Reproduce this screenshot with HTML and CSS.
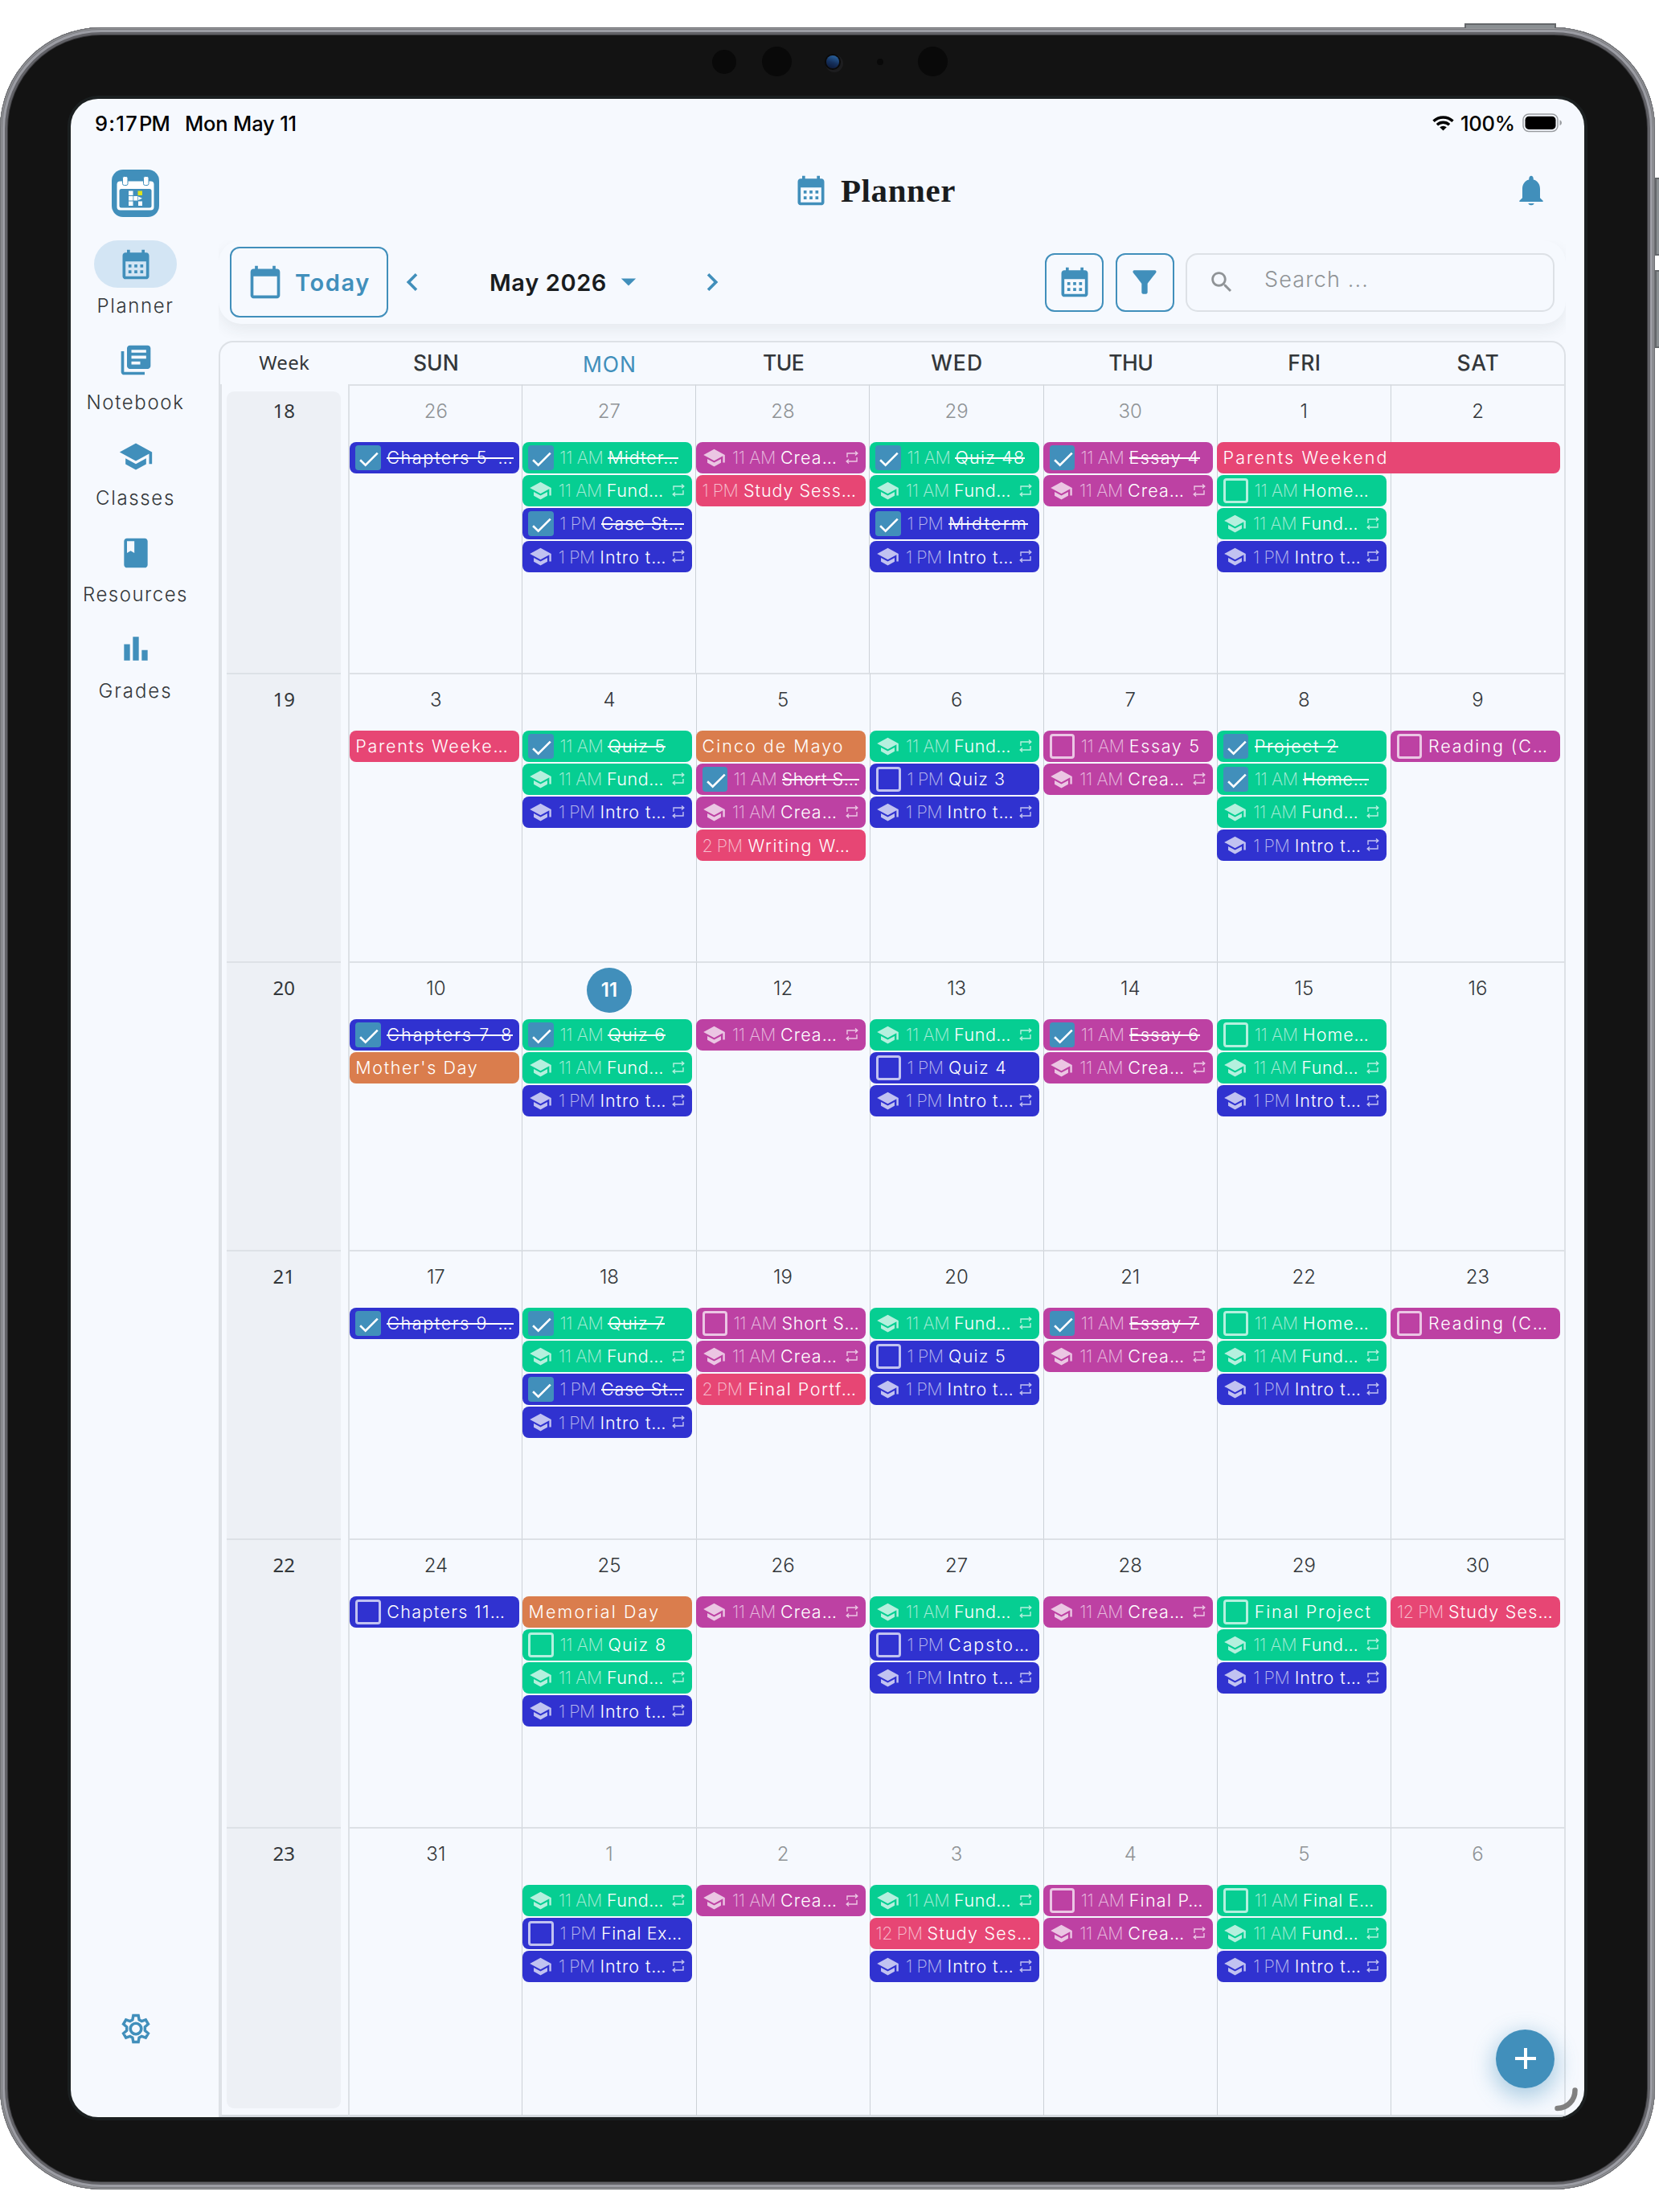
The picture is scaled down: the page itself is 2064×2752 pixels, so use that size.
FILE: index.html
```
<!DOCTYPE html>
<html lang="en">
<head>
  <meta charset="UTF-8" />
  <meta name="viewport" content="width=device-width, initial-scale=1.0" />
  <title>Planner</title>
  <link rel="stylesheet" href="styles.css">
</head>
<body>
  <!-- shared icons -->
  <svg class="defs" width="0" height="0">
    <symbol id="i-month" viewBox="0 0 24 24"><path d="M19 4h-1V2h-2v2H8V2H6v2H5c-1.100 0-2 .9-2 2v14c0 1.100.9 2 2 2h14c1.100 0 2-.9 2-2V6c0-1.100-.9-2-2-2zm0 16H5V10h14v10zM9 14H7v-2h2v2zm4 0h-2v-2h2v2zm4 0h-2v-2h2v2zm-8 4H7v-2h2v2zm4 0h-2v-2h2v2zm4 0h-2v-2h2v2z"/></symbol>
    <symbol id="i-day" viewBox="0 0 24 24"><path d="M20 3h-1V1h-2v2H7V1H5v2H4c-1.100 0-2 .9-2 2v16c0 1.100.9 2 2 2h16c1.100 0 2-.9 2-2V5c0-1.100-.9-2-2-2zm0 18H4V8h16v13z"/></symbol>
    <symbol id="i-notes" viewBox="0 0 24 24"><path d="M4 6H2v14c0 1.100.9 2 2 2h14v-2H4V6zM20 2H8c-1.100 0-2 .9-2 2v12c0 1.100.9 2 2 2h12c1.100 0 2-.9 2-2V4c0-1.100-.9-2-2-2zm-1 9H9V9h10v2zm-4 4H9v-2h6v2zm4-8H9V5h10v2z"/></symbol>
    <symbol id="i-school" viewBox="0 0 24 24"><path d="M5 13.180v4L12 21l7-3.820v-4L12 17l-7-3.820zM12 3L1 9l11 6 9-4.910V17h2V9L12 3z"/></symbol>
    <symbol id="i-book" viewBox="0 0 24 24"><path d="M18 2H6c-1.100 0-2 .9-2 2v16c0 1.100.9 2 2 2h12c1.100 0 2-.9 2-2V4c0-1.100-.9-2-2-2zM6 4h5v8l-2.500-1.500L6 12V4z"/></symbol>
    <symbol id="i-bars" viewBox="0 0 24 24"><path d="M4 9h4v11H4zM16 13h4v7h-4zM10 4h4v16h-4z"/></symbol>
    <symbol id="i-repeat" viewBox="0 0 16 16"><path d="M2 8V3h12M12 .5L14.800 3 12 5.500M14 8v5H2M4 10.500L1.200 13 4 15.500" fill="none" stroke="currentColor" stroke-width="1.400"/></symbol>
    <symbol id="i-check" viewBox="0 0 31 31"><path d="M6 18l6.500 6.200L27.300 9.500" fill="none" stroke="#fff" stroke-width="2.600"/></symbol>
  </svg>

  <div class="device">
    <span class="hw-btn hw-top"></span>
    <span class="hw-btn hw-vol1"></span>
    <span class="hw-btn hw-vol2"></span>
    <span class="sensor s1"></span>
    <span class="sensor s2"></span>
    <span class="sensor lens"></span>
    <span class="sensor s3"></span>
    <span class="sensor s4"></span>

    <div class="screen">
      <div class="status">
        <span class="status-time"><span data-w="54">9:17</span><span data-w="38">PM</span></span>
        <span data-w="139">Mon May 11</span>
        <span class="status-right">
          <svg class="wifi" viewBox="0 0 27 19"><path d="M1.500 6.800a17.500 17.500 0 0 1 24 0M5.900 11.200a11.200 11.200 0 0 1 15.200 0" fill="none" stroke="#000" stroke-width="3.400"/><path d="M9.200 14.300a6.500 6.500 0 0 1 8.600 0L13.500 18.600z"/></svg>
          <span data-w="68">100%</span>
          <svg class="battery" viewBox="0 0 50 24"><rect x="1" y="1" width="43" height="21.500" rx="7" fill="none" stroke="#999ca0" stroke-width="1.500"/><rect x="3.500" y="3.700" width="38" height="16.200" rx="4.500"/><path d="M46.500 8.200c3.300 1.500 3.300 5.500 0 7z" fill="#999ca0"/></svg>
        </span>
      </div>

      <div class="app">
        <nav class="sidebar">
          <svg class="logo" viewBox="0 0 59 59">
            <rect width="59" height="59" rx="14" fill="#418fbb"/>
            <rect x="6.500" y="14.500" width="46" height="36" rx="4" fill="#fff"/>
            <rect x="9.500" y="24" width="40" height="23.500" rx="2.500" fill="#418fbb"/>
            <rect x="13.500" y="8.500" width="6.500" height="11" rx="2" fill="#fff" stroke="#418fbb"/>
            <rect x="39.500" y="8.500" width="6.500" height="11" rx="2" fill="#fff" stroke="#418fbb"/>
            <path d="M21 26.500h5.500v5.500H21zM21 33h5.500v5.500H21zM21 39.500h5.500V45H21zM27.300 33h5v5.500h-5zM33 33.500l5 2.200-5 2.300zM33 39.500h5V45h-5z" fill="#fff"/>
            <path d="M32.500 26.500H38V32h-5.500z" fill="#dfe31c"/>
          </svg>
          <a class="nav-item active"><span class="pill"><svg><use href="#i-month"/></svg></span><span class="label" data-w="96">Planner</span></a>
          <a class="nav-item"><span class="pill"><svg><use href="#i-notes"/></svg></span><span class="label" data-w="122">Notebook</span></a>
          <a class="nav-item"><span class="pill"><svg><use href="#i-school"/></svg></span><span class="label" data-w="99">Classes</span></a>
          <a class="nav-item"><span class="pill"><svg><use href="#i-book"/></svg></span><span class="label" data-w="131">Resources</span></a>
          <a class="nav-item"><span class="pill"><svg><use href="#i-bars"/></svg></span><span class="label" data-w="92">Grades</span></a>
          <svg class="settings" viewBox="0 0 24 24"><path d="M10.300 3h3.400l.55 2.900 1.700 1 2.750-1 1.700 2.950-2.200 1.900v2.500l2.200 1.900-1.700 2.950-2.750-1-1.700 1-.55 2.900h-3.400l-.55-2.900-1.700-1-2.750 1-1.700-2.950 2.200-1.900v-2.500l-2.200-1.900 1.700-2.950 2.750 1 1.700-1z"/><circle cx="12" cy="12" r="3.700"/></svg>
        </nav>

        <main>
          <header>
            <svg class="ic title-ic"><use href="#i-month"/></svg>
            <h1 data-w="143">Planner</h1>
            <svg class="ic bell" viewBox="0 0 24 24"><path d="M12 22c.9 0 1.800-.5 2-1.300h-4c.2.8 1.100 1.300 2 1.300zM18 17V11c0-3.070-1.640-5.640-4.500-6.320V4c0-1.100-.67-2-1.500-2s-1.500.9-1.500 2v.68C7.630 5.360 6 7.920 6 11v6l-2 2v.6h16V19l-2-2z"/></svg>
          </header>

          <div class="toolbar-wrap">
            <div class="toolbar">
              <button class="btn today-btn"><svg class="ic"><use href="#i-day"/></svg><span data-w="94">Today</span></button>
              <svg class="ic prev" viewBox="0 0 24 24"><path d="M15.410 7.410L14 6l-6 6 6 6 1.410-1.410L10.830 12z"/></svg>
              <div class="month">
                <span data-w="146">May 2026</span>
                <svg class="ic" viewBox="0 0 24 24"><path d="M7 9.500l5 5 5-5z"/></svg>
              </div>
              <svg class="ic" viewBox="0 0 24 24"><path d="M10 6L8.590 7.410 13.170 12l-4.580 4.590L10 18l6-6z"/></svg>
              <button class="btn sq push"><svg class="ic"><use href="#i-month"/></svg></button>
              <button class="btn sq"><svg class="ic" viewBox="0 0 24 24"><path d="M4.250 5.610C6.270 8.200 10 13 10 13v6c0 .55.45 1 1 1h2c.55 0 1-.45 1-1v-6s3.720-4.800 5.740-7.390c.51-.66.04-1.610-.79-1.610H5.040c-.83 0-1.300.95-.79 1.610z"/></svg></button>
              <div class="search">
                <svg viewBox="0 0 24 24"><path d="M15.500 14h-.79l-.28-.27C15.410 12.590 16 11.110 16 9.500 16 5.910 13.090 3 9.500 3S3 5.910 3 9.500 5.910 16 9.500 16c1.610 0 3.090-.59 4.230-1.570l.27.28v.79l5 4.990L20.490 19l-4.990-5zm-6 0C7.010 14 5 11.990 5 9.500S7.010 5 9.500 5 14 7.010 14 9.500 11.990 14 9.500 14z"/></svg>
                <span data-w="130">Search ...</span>
              </div>
            </div>
          </div>

          <section class="calendar">
            <div class="cal-head">
              <span class="week-title"><span data-w="63">Week</span></span>
              <span class="dow"><span data-w="57">SUN</span></span>
              <span class="dow now"><span data-w="67">MON</span></span>
              <span class="dow"><span data-w="51">TUE</span></span>
              <span class="dow"><span data-w="65">WED</span></span>
              <span class="dow"><span data-w="55">THU</span></span>
              <span class="dow"><span data-w="41">FRI</span></span>
              <span class="dow"><span data-w="53">SAT</span></span>
            </div>
            <div class="weeks" id="weeks"></div>
          </section>
        </main>
      </div>

      <div class="fab"><svg viewBox="0 0 26 26"><path d="M13 0v26M0 13h26" stroke="#fff" stroke-width="4"/></svg></div>
      <svg class="resize" viewBox="0 0 30 30"><path d="M25.500 3.500A22 22 0 0 1 3.500 26" fill="none" stroke="#808080" stroke-width="6.500" stroke-linecap="round"/></svg>
    </div>
  </div>

  <script src="planner.js"></script>
</body>
</html>
```
FILE: styles.css
```
:root {
  --blue: #418fbb;
  --bg: #f6f9fe;
  --line: #dde1e6;
  --text: #33373a;
  --muted: #8f9396;
}
* { box-sizing: border-box; margin: 0; padding: 0; }
body {
  width: 2064px;
  height: 2752px;
  padding-top: 34px;
  overflow: hidden;
  background: #fff;
  color: var(--text);
  font-family: Inter, "Noto Sans", sans-serif;
}
.defs { position: absolute; }
svg { display: block; fill: currentColor; flex: none; }
[data-w] { display: inline-block; white-space: nowrap; }

/* tablet body */
.device {
  position: relative;
  width: 2059px;
  height: 2690px;
  padding: 89px 88px;
  border-radius: 126px;
  background: #131313;
  box-shadow: inset 0 0 0 1px #6c6d71, inset 0 0 0 2px #97989c, inset 0 0 0 3px #77787c, inset 0 0 0 6px #9c9da4, inset 0 0 0 9px #626267, inset 0 0 0 10px #3a3a3d;
}
.hw-btn {
  position: absolute;
  background: #8b9093;
  border: 2px solid #65686b;
}
.hw-top { left: 1822px; top: -5px; width: 114px; height: 6px; border-bottom: 0; }
.hw-vol1 { left: 2059px; top: 187px; width: 8px; height: 97px; }
.hw-vol2 { left: 2059px; top: 302px; width: 8px; height: 97px; }
.sensor {
  position: absolute;
  border-radius: 50%;
  background: #090909;
}
.s1 { left: 886px; top: 28px; width: 30px; height: 30px; }
.s2 { left: 948px; top: 24px; width: 37px; height: 37px; }
.s3 { left: 1091px; top: 39px; width: 8px; height: 8px; }
.s4 { left: 1142px; top: 24px; width: 37px; height: 37px; }
.lens {
  left: 1028px;
  top: 35px;
  width: 16px;
  height: 16px;
  background: linear-gradient(200deg, #2d6cab, #15305c 55%, #0b1430);
  box-shadow: 0 0 0 2px #0a0a0a, 2px 2px 0 3px #1d1d1f;
}
.screen {
  position: relative;
  width: 1883px;
  height: 2511px;
  border-radius: 34px;
  background: var(--bg);
  overflow: hidden;
  box-shadow: 0 0 0 4px #1b1f20;
}

/* status bar */
.status {
  height: 62px;
  padding: 0 27px 2px 30px;
  display: flex;
  align-items: center;
  color: #000;
  font-size: 25.500px;
  font-weight: 500;
}
.status-time { margin-right: 19px; display: flex; gap: 1px; }
.status-right { margin-left: auto; display: flex; align-items: center; }
.wifi { width: 27px; height: 19px; margin-right: 8px; }
.battery { width: 50px; height: 24px; margin-left: 9px; }

.app { display: flex; }

/* sidebar */
.sidebar {
  width: 161px;
  height: 2449px;
  padding: 26px 0 88px;
  display: flex;
  flex-direction: column;
  align-items: center;
}
.logo { width: 59px; height: 59px; margin-bottom: 29px; }
.nav-item {
  height: 119.7px;
  display: flex;
  flex-direction: column;
  align-items: center;
}
.pill {
  width: 103px;
  height: 59px;
  border-radius: 30px;
  display: flex;
  align-items: center;
  justify-content: center;
  color: var(--blue);
}
.active .pill { background: #d3e5f4; }
.pill svg, .ic { width: 44px; height: 44px; }
.label { margin-top: 8px; line-height: 30px; font-size: 24px; font-weight: 300; }
.settings {
  width: 44px;
  height: 44px;
  margin-top: auto;
  fill: none;
  stroke: var(--blue);
  stroke-width: 1.9;
}
.settings circle { stroke-width: 2; }

/* title row */
main { width: 1676px; margin-left: 23px; }
header {
  height: 114px;
  padding: 0 21px 10px 715px;
  display: flex;
  align-items: center;
}
.ic { color: var(--blue); }
h1 {
  margin-left: 15px;
  font: 700 41px "Liberation Serif", serif;
  color: #191c1e;
}
.bell { margin-left: auto; }

/* toolbar */
.toolbar-wrap { height: 125px; overflow: hidden; }
.toolbar {
  height: 104px;
  padding: 0 14px;
  border-radius: 28px;
  background: var(--bg);
  box-shadow: 0 8px 18px rgba(40, 50, 60, 0.075);
  display: flex;
  align-items: center;
}
.btn {
  background: none;
  border: 2px solid var(--blue);
  border-radius: 12px;
  color: var(--blue);
  font: 600 29px Inter, sans-serif;
  display: flex;
  align-items: center;
  justify-content: center;
}
.today-btn { width: 197px; height: 88px; gap: 15px; }
.prev { margin-left: 8px; }
.month {
  width: 329px;
  padding-left: 74px;
  display: flex;
  align-items: center;
  color: #191c1e;
  font-size: 29px;
  font-weight: 600;
}
.month svg { margin-left: 5px; }
.sq { width: 73px; height: 73px; margin-right: 14.500px; }
.push { margin-left: auto; }
.search {
  width: 459px;
  height: 73px;
  padding-left: 26px;
  border: 2px solid var(--line);
  border-radius: 15px;
  display: flex;
  align-items: center;
  color: var(--muted);
  font-size: 27px;
  font-weight: 300;
}
.search svg { width: 34px; height: 34px; margin-right: 36px; }
.search span { margin-bottom: 8px; }

/* calendar */
.calendar {
  height: 2210px;
  border: 2px solid var(--line);
  border-bottom: 3px solid #d5dae0;
  border-top-left-radius: 18px;
  border-top-right-radius: 18px;
}
.cal-head { height: 52px; display: flex; }
.week-title {
  width: 159.500px;
  line-height: 50px;
  text-align: center;
  font-family: "Noto Sans", sans-serif;
  font-size: 24px;
}
.dow {
  width: 216.300px;
  line-height: 51px;
  padding-left: 2px;
  text-align: center;
  font-size: 26.500px;
  font-weight: 500;
}
.now { color: var(--blue); font-weight: 400; line-height: 54px; }
.weeks { border-left: 2px solid var(--line); }
.row { display: flex; height: 359px; }
.week-no {
  width: 142.500px;
  margin: 0 9px 0 6px;
  padding-top: 15px;
  border-top: 2px solid var(--line);
  background: #edf0f5;
  text-align: center;
  font: 24px/32px "Noto Sans", sans-serif;
}
.row:first-child .week-no {
  margin-top: 9px;
  padding-top: 8px;
  border-top: 0;
  border-radius: 9px 9px 0 0;
}
.row:last-child .week-no { margin-bottom: 9px; border-radius: 0 0 9px 9px; }
.day {
  width: 216.400px;
  border-top: 2px solid var(--line);
  border-left: 1px solid #ccd1d7;
}
.day:nth-child(2) { border-left: 2px solid var(--line); }
.date {
  height: 70px;
  padding-bottom: 7px;
  display: flex;
  align-items: center;
  justify-content: center;
  font-size: 24px;
  font-weight: 300;
}
.other { color: var(--muted); }
.today span {
  width: 56px;
  height: 56px;
  margin-top: 5px;
  border-radius: 50%;
  background: var(--blue);
  color: #fff;
  line-height: 56px;
  text-align: center;
  font-weight: 600;
}
.event {
  position: relative;
  width: 211px;
  height: 38.500px;
  margin: 0 0 2.600px -.5px;
  padding-left: 7.500px;
  border-radius: 8px;
  display: flex;
  align-items: center;
  color: #fff;
  font-size: 21.500px;
  font-weight: 350;
  white-space: nowrap;
}
.wide { width: 427px; }
.g { background: #06ce92; }
.b { background: #3032d0; }
.m { background: #bd41a3; }
.r { background: #e74674; }
.o { background: #da7d4d; }
.box {
  width: 31.500px;
  height: 31.500px;
  margin-right: 7.500px;
  border-radius: 4px;
  flex: none;
}
.box svg { width: 100%; height: 100%; }
.box.on { background: var(--blue); }
.box.off { border: 3px solid rgba(255, 255, 255, 0.7); }
.school { width: 29px; height: 29px; margin: 0 8px 0 .5px; opacity: 0.7; }
.time { opacity: 0.65; font-weight: 200; flex: none; }
.t11 { width: 60px; }
.t12 { width: 64px; }
.t1 { width: 51.500px; }
.t2 { width: 57px; }
.done { position: relative; }
.done::after {
  content: "";
  position: absolute;
  left: 0;
  right: 0;
  top: 50%;
  height: 2px;
  background: #fff;
}
.repeat { position: absolute; right: 9px; top: 11px; width: 16px; height: 16px; opacity: 0.7; }

/* floating bits */
.fab {
  position: absolute;
  left: 1773px;
  top: 2401.500px;
  width: 73px;
  height: 73px;
  border-radius: 50%;
  background: var(--blue);
  box-shadow: 0 8px 26px 4px rgba(65, 143, 187, 0.4);
  display: flex;
  align-items: center;
  justify-content: center;
}
.fab svg { width: 26px; height: 26px; }
.resize { position: absolute; left: 1846px; top: 2474px; width: 30px; height: 30px; }
```
FILE: planner.js
```
// event: [color, kind, time, title, title width]
// kind: x = done, o = open, c = class, '' = plain
var fund = ['g', 'c', '11 AM', 'Fund…', 71];
var crea = ['m', 'c', '11 AM', 'Crea…', 71];
var intro = ['b', 'c', '1 PM', 'Intro t…', 83];

var weeks = [
  { no: 18, days: [
    ['26', ['b', 'x', '', 'Chapters 5–…', 158]],
    ['27', ['g', 'x', '11 AM', 'Midter…', 88], fund, ['b', 'x', '1 PM', 'Case St…', 103], intro],
    ['28', crea, ['r', '', '1 PM', 'Study Sess…', 141]],
    ['29', ['g', 'x', '11 AM', 'Quiz 48', 87], fund, ['b', 'x', '1 PM', 'Midterm', 99], intro],
    ['30', ['m', 'x', '11 AM', 'Essay 4', 88], crea],
    ['1', ['r wide', '', '', 'Parents Weekend', 206], ['g', 'o', '11 AM', 'Home…', 83], fund, intro],
    ['2']
  ] },
  { no: 19, days: [
    ['3', ['r', '', '', 'Parents Weeke…', 191]],
    ['4', ['g', 'x', '11 AM', 'Quiz 5', 72], fund, intro],
    ['5', ['o', '', '', 'Cinco de Mayo', 177], ['m', 'x', '11 AM', 'Short S…', 96], crea, ['r', '', '2 PM', 'Writing W…', 128]],
    ['6', fund, ['b', 'o', '1 PM', 'Quiz 3', 71], intro],
    ['7', ['m', 'o', '11 AM', 'Essay 5', 89], crea],
    ['8', ['g', 'x', '', 'Project 2', 104], ['g', 'x', '11 AM', 'Home…', 82], fund, intro],
    ['9', ['m', 'o', '', 'Reading (C…', 150]]
  ] },
  { no: 20, days: [
    ['10', ['b', 'x', '', 'Chapters 7–8', 157], ['o', '', '', "Mother's Day", 153]],
    ['11', ['g', 'x', '11 AM', 'Quiz 6', 72], fund, intro],
    ['12', crea],
    ['13', fund, ['b', 'o', '1 PM', 'Quiz 4', 73], intro],
    ['14', ['m', 'x', '11 AM', 'Essay 6', 88], crea],
    ['15', ['g', 'o', '11 AM', 'Home…', 83], fund, intro],
    ['16']
  ] },
  { no: 21, days: [
    ['17', ['b', 'x', '', 'Chapters 9–…', 158]],
    ['18', ['g', 'x', '11 AM', 'Quiz 7', 71], fund, ['b', 'x', '1 PM', 'Case St…', 103], intro],
    ['19', ['m', 'o', '11 AM', 'Short S…', 97], crea, ['r', '', '2 PM', 'Final Portf…', 136]],
    ['20', fund, ['b', 'o', '1 PM', 'Quiz 5', 72], intro],
    ['21', ['m', 'x', '11 AM', 'Essay 7', 87], crea],
    ['22', ['g', 'o', '11 AM', 'Home…', 83], fund, intro],
    ['23', ['m', 'o', '', 'Reading (C…', 150]]
  ] },
  { no: 22, days: [
    ['24', ['b', 'o', '', 'Chapters 11…', 148]],
    ['25', ['o', '', '', 'Memorial Day', 164], ['g', 'o', '11 AM', 'Quiz 8', 73], fund, intro],
    ['26', crea],
    ['27', fund, ['b', 'o', '1 PM', 'Capsto…', 102], intro],
    ['28', crea],
    ['29', ['g', 'o', '', 'Final Project', 146], fund, intro],
    ['30', ['r', '', '12 PM', 'Study Ses…', 131]]
  ] },
  { no: 23, days: [
    ['31'],
    ['1', fund, ['b', 'o', '1 PM', 'Final Ex…', 101], intro],
    ['2', crea],
    ['3', fund, ['r', '', '12 PM', 'Study Ses…', 131], intro],
    ['4', ['m', 'o', '11 AM', 'Final P…', 93], crea],
    ['5', ['g', 'o', '11 AM', 'Final E…', 89], fund, intro],
    ['6']
  ] }
];

var timeWidth = { '11 AM': 54, '12 PM': 58, '1 PM': 45, '2 PM': 50 };

function eventHtml(e) {
  var html = '<div class="event ' + e[0] + '">';
  if (e[1] === 'x') html += '<span class="box on"><svg><use href="#i-check"/></svg></span>';
  if (e[1] === 'o') html += '<span class="box off"></span>';
  if (e[1] === 'c') html += '<svg class="school"><use href="#i-school"/></svg>';
  if (e[2]) html += '<span class="time t' + parseInt(e[2], 10) + '"><span data-w="' + timeWidth[e[2]] + '">' + e[2] + '</span></span>';
  html += '<span class="' + (e[1] === 'x' ? 'done' : 'name') + '" data-w="' + e[4] + '">' + e[3] + '</span>';
  if (e[1] === 'c') html += '<svg class="repeat"><use href="#i-repeat"/></svg>';
  return html + '</div>';
}

document.getElementById('weeks').innerHTML = weeks.map(function (week, w) {
  return '<div class="row"><div class="week-no">' + week.no + '</div>' + week.days.map(function (day, d) {
    var other = (w === 0 && d < 5) || (w === 5 && d > 0);
    var today = w === 2 && d === 1;
    return '<div class="day"><div class="date' + (other ? ' other' : '') + (today ? ' today' : '') + '"><span>' + day[0] + '</span></div>' +
      day.slice(1).map(eventHtml).join('') + '</div>';
  }).join('') + '</div>';
}).join('');

// track labels out to their set width
document.querySelectorAll('[data-w]').forEach(function (el) {
  var gap = (el.dataset.w - el.getBoundingClientRect().width) / el.textContent.length;
  el.style.letterSpacing = gap + 'px';
});
```
